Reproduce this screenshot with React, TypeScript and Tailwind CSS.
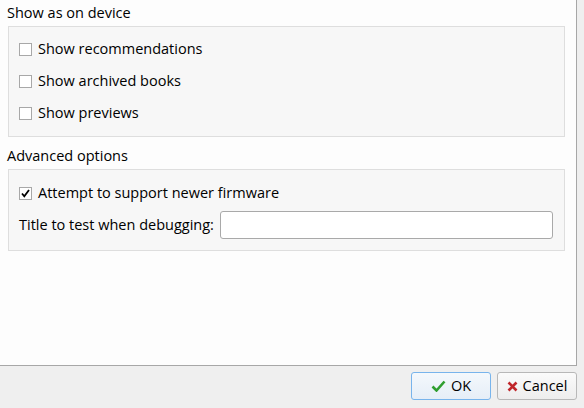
import React, { useState } from 'react';

const font = { fontFamily: '"Open Sans", "Noto Sans", sans-serif' };

function Check({ checked, label, onChange }: { checked: boolean; label: string; onChange: () => void }) {
  return (
    <label className="flex items-center h-[20px] cursor-default" onClick={onChange}>
      <span className="w-[13px] h-[13px] border border-[#a8a8a8] bg-white flex items-center justify-center">
        {checked && (
          <svg width="11" height="11" viewBox="0 0 11 11">
            <path d="M2 5.5 L4.3 8.3 L9 2" fill="none" stroke="#000" strokeWidth="1.8" />
          </svg>
        )}
      </span>
      <span className="ml-[6px] text-[14.5px] text-black">{label}</span>
    </label>
  );
}

export default function App() {
  const [opts, setOpts] = useState({ rec: false, arch: false, prev: false, fw: true });
  const [title, setTitle] = useState('');
  const toggle = (k: keyof typeof opts) => setOpts({ ...opts, [k]: !opts[k] });

  return (
    <div className="w-[584px] h-[408px] bg-[#efefef] flex flex-col" style={font}>
      <div className="w-[577px] h-[366px] bg-[#fdfdfd] border-r border-b border-[#a7a7a7] pl-[8px] pr-[11px]">
        <div className="text-[14.5px] text-black h-[26px] pt-[2px] -ml-px">Show as on device</div>
        <div className="h-[111px] bg-[#f7f7f7] border border-[#dedede] pl-[10px] pt-[12px] flex flex-col gap-[12px]">
          <Check checked={opts.rec} label="Show recommendations" onChange={() => toggle('rec')} />
          <Check checked={opts.arch} label="Show archived books" onChange={() => toggle('arch')} />
          <Check checked={opts.prev} label="Show previews" onChange={() => toggle('prev')} />
        </div>
        <div className="text-[14.5px] text-black h-[32px] pt-[8px] -ml-px">Advanced options</div>
        <div className="h-[82px] bg-[#f7f7f7] border border-[#dedede] pl-[10px] pr-[11px] pt-[13px] flex flex-col">
          <Check checked={opts.fw} label="Attempt to support newer firmware" onChange={() => toggle('fw')} />
          <div className="flex items-center mt-[8px]">
            <span className="text-[14.5px] text-black whitespace-nowrap">Title to test when debugging:</span>
            <input
              value={title}
              onChange={e => setTitle(e.target.value)}
              className="ml-[6px] flex-1 h-[28px] bg-white border border-[#a9a9a9] rounded-[3px] outline-none px-1 text-[14px]"
            />
          </div>
        </div>
      </div>
      <div className="flex justify-end gap-[6px] pr-[7px] pt-[6px]">
        <button className="w-[80px] h-[28px] rounded-[3px] border border-[#78b4ec] bg-gradient-to-b from-[#f4f8fc] to-[#e6eef7] flex items-center justify-center gap-[5px] text-[14.5px] text-black">
          <svg width="15" height="12" viewBox="0 0 15 12">
            <path d="M1.5 6.5 L5.5 10.5 L13.5 1.5" fill="none" stroke="#2f9e2f" strokeWidth="2.6" />
          </svg>
          OK
        </button>
        <button className="w-[80px] h-[28px] rounded-[3px] border border-[#b8b8b8] bg-gradient-to-b from-[#fbfbfb] to-[#ededed] flex items-center justify-center gap-[5px] text-[14.5px] text-black">
          <svg width="11" height="11" viewBox="0 0 11 11">
            <path d="M1.5 1.5 L9.5 9.5 M9.5 1.5 L1.5 9.5" fill="none" stroke="#c0262a" strokeWidth="2.6" />
          </svg>
          Cancel
        </button>
      </div>
    </div>
  );
}
